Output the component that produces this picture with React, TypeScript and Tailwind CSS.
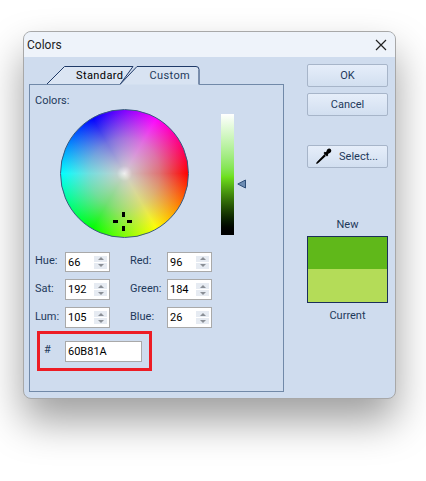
import React from 'react';

const labelColor = 'text-[#1e395b]';

const SpinField: React.FC<{ label: string; value: string; labelWidth: string; fieldHeight?: string }> = ({
  label,
  value,
  labelWidth,
  fieldHeight = 'h-[21px]',
}) => (
  <div className="flex items-center">
    <span className={`${labelWidth} ${labelColor} -mt-[3px]`}>{label}</span>
    <div className={`flex items-center justify-between w-[45px] ${fieldHeight} bg-white border border-[#a9a9a9] pl-[2px] pr-[2px] text-black`}>
      <span>{value}</span>
      <div className="flex flex-col gap-[1px] w-[13px]">
        <div className="h-[6px] bg-[#e6ebf2] flex items-center justify-center">
          <div className="w-0 h-0 border-x-[3px] border-x-transparent border-b-[3px] border-b-[#8a8f96]" />
        </div>
        <div className="h-[6px] bg-[#e6ebf2] flex items-center justify-center">
          <div className="w-0 h-0 border-x-[3px] border-x-transparent border-t-[3px] border-t-[#8a8f96]" />
        </div>
      </div>
    </div>
  </div>
);

const DialogButton: React.FC<{ className?: string; children: React.ReactNode }> = ({ className, children }) => (
  <button
    className={`flex items-center justify-center w-[81px] h-[23px] rounded-[2px] border border-[#a7b5c9] bg-gradient-to-b from-[#e6eefa] to-[#d2dff0] ${labelColor} ${className ?? ''}`}
  >
    {children}
  </button>
);

export default function App() {
  return (
    <div className="w-[426px] h-[481px] overflow-hidden bg-white pt-[31px] pl-[23px] text-[11px] leading-none font-['Roboto','Liberation_Sans',sans-serif]">
      <div className="w-[373px] h-[368px] rounded-[8px] border border-[#a8a8a8] overflow-hidden bg-[#cfdcee] shadow-[0_22px_40px_rgba(0,0,0,0.38)]">
        {/* Title bar */}
        <div className="flex items-center justify-between h-[25px] bg-[#eef3fa] pl-[3px] pr-[8px]">
          <span className="text-[12px] text-[#222]">Colors</span>
          <svg width="12" height="12" viewBox="0 0 12 12" className="mt-[1px]">
            <path d="M1 1 L11 11 M11 1 L1 11" stroke="#222" strokeWidth="1.2" fill="none" />
          </svg>
        </div>

        <div className="flex pl-[5px] pt-[9px]">
          {/* Left: tabs + panel */}
          <div className="w-[255px]">
            <div className="relative h-[18px] flex pl-[47px] text-[11px] tracking-[0.4px]">
              <svg width="255" height="19" viewBox="0 0 255 19" className="absolute left-0 top-0">
                <path d="M17.5 18.5 L35.5 0.5 L104 0.5 L91 18.5" fill="#dbe5f3" stroke="#1f3a68" strokeWidth="1" />
                <path d="M91 18.5 L108 0.5 L167 0.5 Q170 0.5 170 3.5 L170 18.5" fill="#d8e3f2" stroke="#1f3a68" strokeWidth="1" />
                <path d="M0 18.5 H17.5 M91 18.5 H17.5 M170 18.5 H255" stroke="#7189a8" strokeWidth="1" fill="none" />
              </svg>
              <span className="relative mt-[4px] text-black">Standard</span>
              <span className="relative mt-[4px] ml-[26px] text-[#1e395b]">Custom</span>
            </div>

            <div className="w-[255px] h-[308px] border border-t-0 border-[#7189a8] pt-[11px] pl-[5px]">
              <div className={labelColor}>Colors:</div>

              <div className="flex mt-[3px] ml-[25px]">
                {/* Color wheel */}
                <div className="relative w-[129px] h-[129px] rounded-full border border-[#3a5a80] bg-[radial-gradient(circle_closest-side,#efefef_0%,rgba(206,206,206,0.92)_12%,rgba(198,198,198,0.58)_55%,rgba(195,195,195,0)_100%),conic-gradient(from_90deg,#ff0000,#ffff00,#00ff00,#00ffff,#0000ff,#ff00ff,#ff0000)]">
                  <div className="absolute left-[61px] top-[102px] w-[3px] h-[5px] bg-black" />
                  <div className="absolute left-[61px] top-[116px] w-[3px] h-[5px] bg-black" />
                  <div className="absolute left-[52px] top-[110px] w-[5px] h-[3px] bg-black" />
                  <div className="absolute left-[66px] top-[110px] w-[5px] h-[3px] bg-black" />
                </div>

                {/* Luminance bar */}
                <div className="flex ml-[32px] mt-[5px]">
                  <div className="w-[13px] h-[121px] bg-gradient-to-b from-white via-[#6ee01c] via-52% to-black" />
                  <div className="ml-[3px] mt-[65px] w-[10px] h-[10px]">
                    <svg width="10" height="10" viewBox="0 0 10 10">
                      <path d="M0.8 5 L8.5 1 L8.5 9 Z" fill="#6d8db3" stroke="#2f4f78" strokeWidth="1" />
                    </svg>
                  </div>
                </div>
              </div>

              {/* HSL / RGB fields */}
              <div className="mt-[14px] flex flex-col gap-[7px]">
                <div className="flex">
                  <SpinField label="Hue:" value="66" labelWidth="w-[30px]" fieldHeight="h-[20px]" />
                  <div className="w-[20px]" />
                  <SpinField label="Red:" value="96" labelWidth="w-[37px]" fieldHeight="h-[20px]" />
                </div>
                <div className="flex">
                  <SpinField label="Sat:" value="192" labelWidth="w-[30px]" />
                  <div className="w-[20px]" />
                  <SpinField label="Green:" value="184" labelWidth="w-[37px]" />
                </div>
                <div className="flex">
                  <SpinField label="Lum:" value="105" labelWidth="w-[30px]" />
                  <div className="w-[20px]" />
                  <SpinField label="Blue:" value="26" labelWidth="w-[37px]" />
                </div>
              </div>

              {/* Hex field, highlighted */}
              <div className="flex items-center mt-[3px] ml-[2px] w-[115px] h-[40px] border-[3px] border-[#ed1c24] pl-[4px]">
                <span className={`w-[21px] ${labelColor} -mt-[3px]`}>#</span>
                <div className="flex items-center w-[77px] h-[21px] bg-white border border-[#a9a9a9] pl-[2px] text-black">
                  60B81A
                </div>
              </div>
            </div>
          </div>

          {/* Right column */}
          <div className="ml-[23px] flex flex-col">
            <DialogButton className="-mt-[2px]">OK</DialogButton>
            <DialogButton className="mt-[6px]">Cancel</DialogButton>
            <DialogButton className="mt-[29px] gap-[7px] pr-[2px]">
              <svg width="17" height="17" viewBox="0 0 17 17">
                <path d="M10 6.5 L2.5 14 L1.5 15.5 L3 14.5 L10.5 7.5" fill="white" stroke="black" strokeWidth="1.1" />
                <path d="M8.5 5 L9.8 3.8 L11 4.2 L12.2 1.6 Q14 -0.2 15.8 1.2 Q17 3 15.2 4.8 L13 6 L13.2 7.2 L12 8.6 Z" fill="black" />
              </svg>
              <span>Select...</span>
            </DialogButton>

            <div className={`mt-[51px] text-center ${labelColor}`}>New</div>
            <div className="mt-[6px] w-[81px] h-[67px] border border-[#1b2f5a] flex flex-col">
              <div className="h-[32px] bg-[#60b81a]" />
              <div className="flex-1 bg-[#b4dc58]" />
            </div>
            <div className={`mt-[7px] text-center ${labelColor}`}>Current</div>
          </div>
        </div>
      </div>
    </div>
  );
}
